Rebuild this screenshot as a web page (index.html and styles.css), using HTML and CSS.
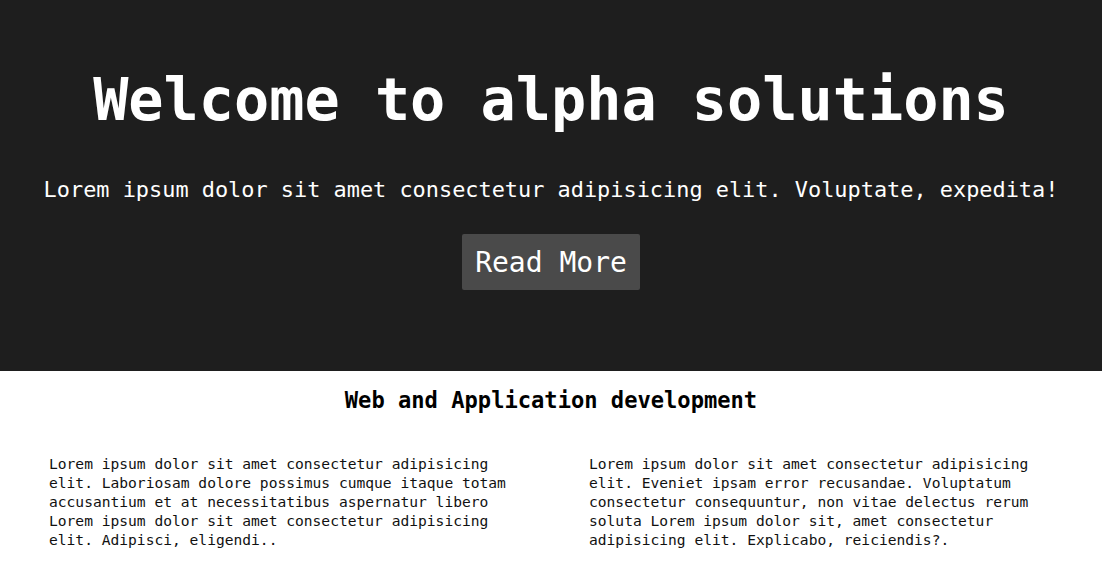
FILE: index.html
```html
<!DOCTYPE html>
<html lang="en">
<head>
<meta charset="utf-8">
<title>Alpha Solutions</title>
<link rel="stylesheet" href="styles.css">
</head>
<body>
<header class="hero">
  <h1 class="hero-title">Welcome to alpha solutions</h1>
  <p class="hero-text">Lorem ipsum dolor sit amet consectetur adipisicing elit. Voluptate, expedita!</p>
  <a class="hero-btn" href="#">Read More</a>
</header>
<section class="services">
  <h2 class="services-title">Web and Application development</h2>
  <div class="services-cols">
    <p class="services-text">Lorem ipsum dolor sit amet consectetur adipisicing elit. Laboriosam dolore possimus cumque itaque totam accusantium et at necessitatibus aspernatur libero Lorem ipsum dolor sit amet consectetur adipisicing elit. Adipisci, eligendi..</p>
    <p class="services-text">Lorem ipsum dolor sit amet consectetur adipisicing elit. Eveniet ipsam error recusandae. Voluptatum consectetur consequuntur, non vitae delectus rerum soluta Lorem ipsum dolor sit, amet consectetur adipisicing elit. Explicabo, reiciendis?.</p>
  </div>
</section>
</body>
</html>
```
FILE: styles.css
```css
* { box-sizing: border-box; }
body {
  margin: 0;
  font-family: "DejaVu Sans Mono", "Liberation Mono", monospace;
  background: #fff;
  color: #000;
}
.hero {
  background: #1e1e1e;
  color: #fff;
  height: 371px;
  padding-top: 65px;
  display: flex;
  flex-direction: column;
  align-items: center;
  text-align: center;
}
.hero-title {
  margin: 0;
  font-size: 58.5px;
  line-height: 70px;
  font-weight: bold;
}
.hero-text {
  margin: 40px 0 0;
  font-size: 21.9px;
  line-height: 30px;
}
.hero-btn {
  margin-top: 29px;
  display: block;
  background: #4a4a4a;
  color: #fff;
  text-decoration: none;
  font-size: 28px;
  line-height: 36px;
  padding: 11px 13px 9px;
  border-radius: 2px;
}
.services-title {
  margin: 15px 0 0;
  text-align: center;
  font-size: 22.1px;
  line-height: 28px;
  font-weight: bold;
}
.services-cols {
  display: grid;
  grid-template-columns: 480px 480px;
  column-gap: 60px;
  padding-left: 49px;
  margin-top: 40px;
}
.services-text {
  margin: 0;
  font-size: 14.6px;
  line-height: 19px;
  color: #111;
}
```
